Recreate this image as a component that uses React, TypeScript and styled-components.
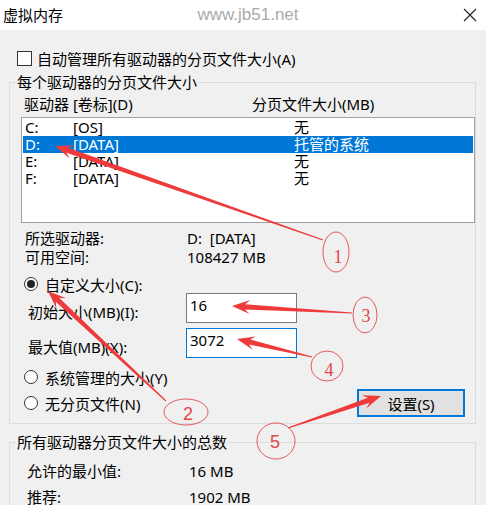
import React from "react";
import styled, { createGlobalStyle } from "styled-components";

const GlobalStyle = createGlobalStyle`
  html, body {
    margin: 0;
    padding: 0;
    background: #f0f0f0;
  }
  body {
    font-family: "Noto Sans", "Noto Sans CJK SC", sans-serif;
    font-size: 15px;
    color: #000;
  }
`;

type Drive = { letter: string; label: string; size: string; selected?: boolean };

const drives: Drive[] = [
  { letter: "C:", label: "[OS]", size: "无" },
  { letter: "D:", label: "[DATA]", size: "托管的系统", selected: true },
  { letter: "E:", label: "[DATA]", size: "无" },
  { letter: "F:", label: "[DATA]", size: "无" },
];

// red markup drawn on top of the screenshot
type Arrow = { from: [number, number]; to: [number, number] };
type Mark = { cx: number; cy: number; rx: number; ry: number; n: string; tx: number; ty: number; serif?: boolean };

const arrows: Arrow[] = [
  { from: [323, 240], to: [55, 146] },
  { from: [166, 401], to: [48, 291] },
  { from: [352, 313], to: [232, 306] },
  { from: [312, 357], to: [237, 339] },
  { from: [288, 428], to: [381, 396] },
];

const marks: Mark[] = [
  { cx: 336, cy: 252, rx: 13, ry: 20, n: "1", tx: 338, ty: 257, serif: true },
  { cx: 186, cy: 412, rx: 22, ry: 13, n: "2", tx: 188, ty: 414 },
  { cx: 365, cy: 315, rx: 12, ry: 18, n: "3", tx: 366, ty: 316, serif: true },
  { cx: 327, cy: 366, rx: 16, ry: 15, n: "4", tx: 329, ty: 370, serif: true },
  { cx: 276, cy: 441, rx: 19, ry: 18, n: "5", tx: 275, ty: 442 },
];

const arrowPoints = ({ from, to }: Arrow) => {
  const [x1, y1] = from;
  const [x2, y2] = to;
  const len = Math.hypot(x2 - x1, y2 - y1);
  const ux = (x2 - x1) / len;
  const uy = (y2 - y1) / len;
  const nx = -uy;
  const ny = ux;
  const head = 18;
  const neck = 13;
  const pt = (d: number, w: number) =>
    `${(x2 - ux * d + nx * w).toFixed(1)},${(y2 - uy * d + ny * w).toFixed(1)}`;
  return [
    pt(len, 0.6),
    pt(neck, 2.6),
    pt(head, 7),
    pt(0, 0),
    pt(head, -7),
    pt(neck, -2.6),
    pt(len, -0.6),
  ].join(" ");
};

const App = () => {
  return (
    <>
      <GlobalStyle />
      <Window>
        <TitleBar>
          <Title>虚拟内存</Title>
          <Watermark>www.jb51.net</Watermark>
          <CloseIcon width="14" height="14" viewBox="0 0 14 14">
            <path d="M1 1 L13 13 M13 1 L1 13" stroke="#222" strokeWidth="1.1" fill="none" />
          </CloseIcon>
        </TitleBar>

        <Body>
          <CheckRow>
            <CheckBox />
            <span>自动管理所有驱动器的分页文件大小(A)</span>
          </CheckRow>

          <Group $top={4} $bottom={6}>
            <Legend>每个驱动器的分页文件大小</Legend>
            <HeaderRow>
              <span>驱动器 [卷标](D)</span>
              <span>分页文件大小(MB)</span>
            </HeaderRow>
            <ListBox>
              {drives.map((d) => (
                <ListRow key={d.letter} $selected={d.selected}>
                  <span>{d.letter}</span>
                  <span>{d.label}</span>
                  <span>{d.size}</span>
                </ListRow>
              ))}
            </ListBox>

            <InfoGrid $indent={15} $row={19} $top={6} $value={162}>
              <span>所选驱动器:</span>
              <span>D:&nbsp;&nbsp;[DATA]</span>
              <span>可用空间:</span>
              <span>108427 MB</span>
            </InfoGrid>

            <RadioRow $top={8}>
              <Radio $checked />
              <span>自定义大小(C):</span>
            </RadioRow>
            <SizeRow $top={0}>
              <SizeLabel>初始大小(MB)(I):</SizeLabel>
              <TextBox>16</TextBox>
            </SizeRow>
            <SizeRow $top={5}>
              <SizeLabel>最大值(MB)(X):</SizeLabel>
              <TextBox $focused>3072</TextBox>
            </SizeRow>
            <RadioRow $top={10}>
              <Radio />
              <span>系统管理的大小(Y)</span>
            </RadioRow>
            <LastRow>
              <RadioRow $top={0}>
                <Radio />
                <span>无分页文件(N)</span>
              </RadioRow>
              <Button>设置(S)</Button>
            </LastRow>
          </Group>

          <Group $top={8} $bottom={6}>
            <Legend>所有驱动器分页文件大小的总数</Legend>
            <InfoGrid $indent={17} $row={26} $top={6} $value={162}>
              <span>允许的最小值:</span>
              <span>16 MB</span>
              <span>推荐:</span>
              <span>1902 MB</span>
            </InfoGrid>
          </Group>
        </Body>

        <Markup width="486" height="505" viewBox="0 0 486 505">
          {arrows.map((a, i) => (
            <polygon key={i} points={arrowPoints(a)} fill="#ee3a3a" />
          ))}
          {marks.map((m) => (
            <g key={m.n}>
              <ellipse cx={m.cx} cy={m.cy} rx={m.rx} ry={m.ry} fill="none" stroke="#e2595d" strokeWidth="1" />
              <text
                x={m.tx}
                y={m.ty}
                textAnchor="middle"
                dominantBaseline="central"
                fill="#e0464a"
                fontSize="18"
                fontFamily={m.serif ? "Liberation Serif, serif" : "Liberation Sans, sans-serif"}
              >
                {m.n}
              </text>
            </g>
          ))}
        </Markup>
      </Window>
    </>
  );
};

const Window = styled.div`
  position: relative;
  width: 486px;
  height: 505px;
  overflow: hidden;
  background: #f0f0f0;
`;

const TitleBar = styled.div`
  height: 30px;
  background: #fff;
  display: flex;
  align-items: center;
  padding: 0 9px 0 3px;
  box-sizing: border-box;
`;

const Title = styled.div`
  line-height: 20px;
`;

const Watermark = styled.div`
  flex: 1;
  text-align: center;
  padding-right: 30px;
  font-family: "Liberation Sans", sans-serif;
  font-size: 17px;
  color: #aaaaaa;
`;

const CloseIcon = styled.svg`
  display: block;
`;

const Body = styled.div`
  padding: 0 10px 0 9px;
`;

const CheckRow = styled.div`
  display: flex;
  align-items: center;
  gap: 5px;
  height: 20px;
  margin-top: 18px;
  padding-left: 8px;
`;

const CheckBox = styled.div`
  width: 15px;
  height: 15px;
  box-sizing: border-box;
  border: 1px solid #333;
  background: #fff;
`;

const Group = styled.fieldset<{ $top: number; $bottom: number }>`
  margin: ${(p) => p.$top}px 0 0;
  padding: 0 0 ${(p) => p.$bottom}px;
  min-width: 0;
  border: 1px solid #dcdcdc;
`;

const Legend = styled.legend`
  margin-left: 6px;
  padding: 0 1px;
  line-height: 20px;
`;

const HeaderRow = styled.div`
  display: grid;
  grid-template-columns: 228px 1fr;
  padding-left: 14px;
  margin-top: 2px;
  line-height: 20px;
`;

const ListBox = styled.div`
  margin: 3px 0 0 11px;
  height: 106px;
  box-sizing: border-box;
  border: 1px solid #a0a0a0;
  background: #fff;
  padding: 1px;
`;

const ListRow = styled.div<{ $selected?: boolean }>`
  display: grid;
  grid-template-columns: 48px 221px 1fr;
  height: 17px;
  line-height: 17px;
  padding-left: 2px;
  background: ${(p) => (p.$selected ? "#0078d7" : "transparent")};
  color: ${(p) => (p.$selected ? "#fff" : "#000")};
`;

const InfoGrid = styled.div<{ $indent: number; $row: number; $top: number; $value: number }>`
  display: grid;
  grid-template-columns: ${(p) => p.$value}px 1fr;
  grid-auto-rows: ${(p) => p.$row}px;
  align-items: center;
  line-height: 17px;
  margin-top: ${(p) => p.$top}px;
  padding-left: ${(p) => p.$indent}px;
`;

const RadioRow = styled.div<{ $top: number }>`
  display: flex;
  align-items: center;
  gap: 7px;
  height: 18px;
  margin-top: ${(p) => p.$top}px;
  padding-left: 14px;
`;

const Radio = styled.div<{ $checked?: boolean }>`
  width: 14px;
  height: 14px;
  box-sizing: border-box;
  border: 1px solid #333;
  border-radius: 50%;
  background: #fff;
  display: flex;
  align-items: center;
  justify-content: center;

  &::after {
    content: "";
    display: ${(p) => (p.$checked ? "block" : "none")};
    width: 8px;
    height: 8px;
    border-radius: 50%;
    background: #222;
  }
`;

const SizeRow = styled.div<{ $top: number }>`
  display: flex;
  align-items: flex-start;
  margin-top: ${(p) => p.$top}px;
  padding-left: 18px;
`;

const SizeLabel = styled.div`
  width: 158px;
  margin-top: 9px;
  line-height: 20px;
`;

const TextBox = styled.div<{ $focused?: boolean }>`
  width: 111px;
  height: 30px;
  box-sizing: border-box;
  border: 1px solid ${(p) => (p.$focused ? "#0078d7" : "#7a7a7a")};
  background: #fff;
  padding: 1px 3px;
  line-height: 20px;
`;

const LastRow = styled.div`
  display: flex;
  align-items: center;
  justify-content: space-between;
  height: 28px;
  margin-top: 3px;
`;

const Button = styled.div`
  width: 108px;
  height: 28px;
  box-sizing: border-box;
  margin-right: 10px;
  border: 2px solid #0078d7;
  background: #e1e1e1;
  display: flex;
  align-items: center;
  justify-content: center;
`;

const Markup = styled.svg`
  position: absolute;
  top: 0;
  left: 0;
  pointer-events: none;
`;

export default App;
